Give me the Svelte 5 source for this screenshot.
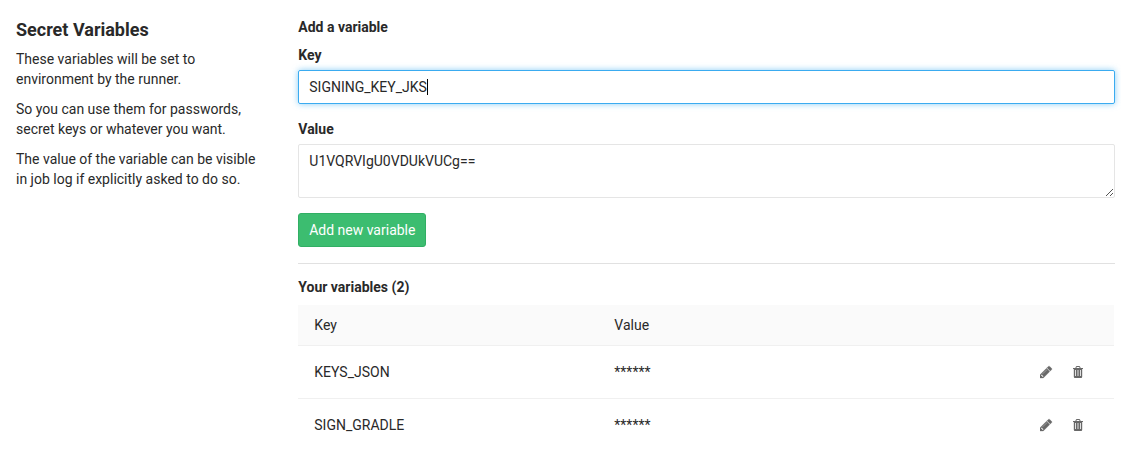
<script>
  const notes = [
    'These variables will be set to environment by the runner.',
    'So you can use them for passwords, secret keys or whatever you want.',
    'The value of the variable can be visible in job log if explicitly asked to do so.'
  ];
  const variables = ['KEYS_JSON', 'SIGN_GRADLE'];
</script>

<div class="page">
  <aside>
    <h4>Secret Variables</h4>
    {#each notes as note}<p>{note}</p>{/each}
  </aside>
  <main>
    <h5>Add a variable</h5>
    <div class="label">Key</div>
    <div class="field focused" role="textbox" aria-label="Key">SIGNING_KEY_JKS<i class="caret"></i></div>
    <div class="label second">Value</div>
    <div class="field area" role="textbox" aria-label="Value">
      U1VQRVIgU0VDUkVUCg==
      <svg class="grip" width="7" height="7" viewBox="0 0 7 7" shape-rendering="crispEdges">
        <path d="M0 6h1v1h-1zM1 5h1v1h-1zM2 4h1v1h-1zM3 3h1v1h-1zM4 2h1v1h-1zM5 1h1v1h-1zM6 0h1v1h-1zM4 6h1v1h-1zM5 5h1v1h-1zM6 4h1v1h-1z" />
      </svg>
    </div>
    <button>Add new variable</button>
    <hr />
    <h5>Your variables (2)</h5>
    <table>
      <thead><tr><th class="key">Key</th><th>Value</th><th class="actions"></th></tr></thead>
      <tbody>
        {#each variables as name}
          <tr>
            <td>{name}</td>
            <td>******</td>
            <td>
              <div class="icons">
                <svg class="pencil" width="14" height="14" viewBox="0 0 1792 1792"><path d="M491 1536l91-91-235-235-91 91v107h128v128h107zm523-928q0-22-22-22-10 0-17 7l-542 542q-7 7-7 17 0 22 22 22 10 0 17-7l542-542q7-7 7-17zm-54-192l416 416-832 832h-416v-416zm683 96q0 53-37 90l-166 166-416-416 166-165q36-38 90-38 53 0 91 38l235 234q37 39 37 91z" transform="translate(-128 0)" /></svg>
                <svg width="14" height="14" viewBox="0 0 14 14"><path fill-rule="evenodd" d="M3.3 3L4 1.4Q4.2 1 4.7 1h2.6q.5 0 .7.4L8.700 3H11v1h-.8v7.800q0 1.200-1.100 1.200H2.900q-1.100 0-1.100-1.200V4H1V3zM4.400 3h3.200l-.4-1H4.800zM3.200 5v6h.8V5zM5.600 5v6h.8V5zM8 5v6h.8V5z" /></svg>
              </div>
            </td>
          </tr>
        {/each}
      </tbody>
    </table>
  </main>
</div>

<style>
  :global(body) { background: #fff; }
  .page {
    display: grid;
    grid-template-columns: 250px 816.7px;
    column-gap: 32.3px;
    padding: 17px 0 0 16px;
    height: 451px;
    overflow: hidden;
    box-sizing: border-box;
    font: 14px/20px Roboto, sans-serif;
    color: #292929;
  }
  h4 { margin: 0 0 7px; font-size: 18px; line-height: 25px; font-weight: 700; }
  p { margin: 0 0 10px; }
  h5 { margin: 0; font-size: 14px; line-height: 20px; font-weight: 700; }
  .label { margin: 8px 0 5px; font-weight: 700; }
  .label.second { margin-top: 15px; }
  .field {
    display: flow-root;
    position: relative;
    box-sizing: border-box;
    height: 34px;
    padding: 6px 10px;
    border: 1px solid #e5e5e5;
    border-radius: 2px;
  }
  .focused { border-color: #3aabf0; box-shadow: 0 0 6px rgba(58, 171, 240, 0.6); }
  .caret { display: inline-block; width: 1px; height: 16px; margin-left: -0.3px; background: #000; vertical-align: -3px; }
  .area { height: 54px; }
  .grip { position: absolute; right: 1px; bottom: 1px; fill: #555; }
  button {
    display: block;
    margin: 15px 0 16px;
    box-sizing: border-box;
    width: 128px;
    height: 34px;
    padding: 0;
    border: 1px solid #31af64;
    border-radius: 3px;
    background: #3cbd70;
    color: #fff;
    font: inherit;
  }
  hr { margin: 0 0 13px; border: 0; border-top: 1px solid #e1e1e1; }
  table { width: 816px; margin-top: 8px; border-collapse: separate; border-spacing: 0; table-layout: fixed; }
  th, td { box-sizing: border-box; padding: 0 16px; text-align: left; font-weight: 400; }
  th { height: 41px; background: #fafafa; border-bottom: 1px solid #f0f0f0; }
  td { height: 53px; border-bottom: 1px solid #f0f0f0; }
  .key { width: 300px; }
  .actions { width: 106px; }
  .icons { display: flex; gap: 18px; margin-left: 15.7px; }
  .icons svg { fill: #686868; }
  .pencil path { stroke: #686868; stroke-width: 40; }
</style>
